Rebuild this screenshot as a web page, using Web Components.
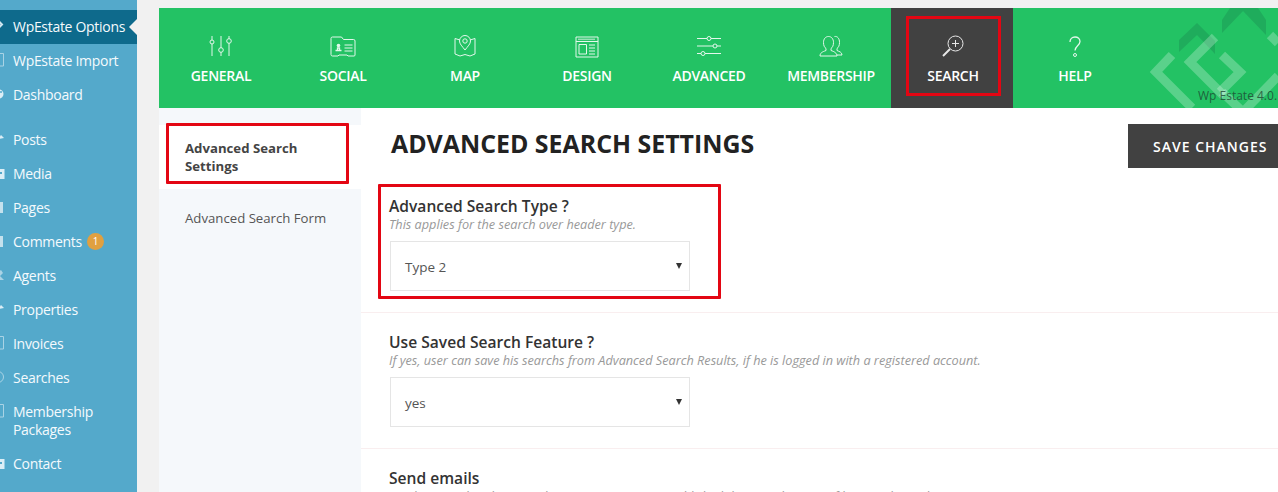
<!DOCTYPE html>
<html>
<head>
<meta charset="utf-8">
<title>WpEstate Options</title>
<style>
	html, body { margin: 0; height: 492px; overflow: hidden; background: #f1f1f1; }
	body { font-family: "Open Sans", sans-serif; }
	.page { display: flex; height: 492px; overflow: hidden; }
</style>
</head>
<body>

<div class="page">
	<wp-sidebar>
		<wp-menu-item icon="diamond" active>WpEstate Options</wp-menu-item>
		<wp-menu-item icon="page">WpEstate Import</wp-menu-item>
		<wp-menu-item icon="dial" last>Dashboard</wp-menu-item>
		<wp-menu-item icon="pin">Posts</wp-menu-item>
		<wp-menu-item icon="media">Media</wp-menu-item>
		<wp-menu-item icon="bar">Pages</wp-menu-item>
		<wp-menu-item icon="bar" badge="1">Comments</wp-menu-item>
		<wp-menu-item icon="user">Agents</wp-menu-item>
		<wp-menu-item icon="pin">Properties</wp-menu-item>
		<wp-menu-item icon="page">Invoices</wp-menu-item>
		<wp-menu-item icon="ring">Searches</wp-menu-item>
		<wp-menu-item icon="page">Membership Packages</wp-menu-item>
		<wp-menu-item icon="media">Contact</wp-menu-item>
	</wp-sidebar>

	<opt-panel>
		<opt-nav slot="nav">
			<opt-tab icon="general">GENERAL</opt-tab>
			<opt-tab icon="social">SOCIAL</opt-tab>
			<opt-tab icon="map">MAP</opt-tab>
			<opt-tab icon="design">DESIGN</opt-tab>
			<opt-tab icon="advanced">ADVANCED</opt-tab>
			<opt-tab icon="membership">MEMBERSHIP</opt-tab>
			<opt-tab icon="search" active>SEARCH</opt-tab>
			<opt-tab icon="help">HELP</opt-tab>
		</opt-nav>

		<opt-subnav slot="side">
			<opt-subitem active>Advanced Search Settings</opt-subitem>
			<opt-subitem>Advanced Search Form</opt-subitem>
		</opt-subnav>

		<opt-header>ADVANCED SEARCH SETTINGS</opt-header>

		<opt-field marked>
			<span slot="title">Advanced Search Type ?</span>
			<span slot="desc">This applies for the search over header type.</span>
			<opt-select>Type 2</opt-select>
		</opt-field>
		<opt-field>
			<span slot="title">Use Saved Search Feature ?</span>
			<span slot="desc">If yes, user can save his searchs from Advanced Search Results, if he is logged in with a registered account.</span>
			<opt-select>yes</opt-select>
		</opt-field>
		<opt-field>
			<span slot="title">Send emails</span>
			<span slot="desc">Send an email to the user when a new property is published that matches one of his saved searches.</span>
			<opt-select>yes</opt-select>
		</opt-field>
	</opt-panel>
</div>

<script>
(function() {
	const SIDE_ICONS = {
		diamond: '<path d="M-1 3.5 2 6.5-1 9.5" fill="none" stroke="#cfe6f0" stroke-width="2"/>',
		page: '<path d="M-2 1.5H3.5V14H-2" fill="none" stroke="#a9d3e5" stroke-width="1"/>',
		dial: '<circle cx="-1" cy="8" r="4.5" fill="#dceef6"/><circle cx="1" cy="6" r="1" fill="#54a9cb"/>',
		pin: '<path d="M-2 8 1 4 4 7Z" fill="#dceef6"/>',
		media: '<path d="M-2 4H4.5V14H-2Z" fill="#dceef6"/><path d="M0 7H2V9H0Z" fill="#54a9cb"/>',
		bar: '<path d="M-2 3H3V14H-2Z" fill="#c4e1ed"/>',
		user: '<path d="M-2 5 1 3 3 6 0 9 4 13H-2Z" fill="#a9d3e5"/>',
		ring: '<circle cx="-2" cy="8" r="5.5" fill="none" stroke="#a9d3e5" stroke-width="1"/>'
	};

	let menuItemTmpl = document.createElement('template');
	menuItemTmpl.innerHTML = `
		<style>
			:host {
				display: flex;
				position: relative;
				padding: 8px 0;
				line-height: 18px;
				font-size: 14px;
				letter-spacing: -0.3px;
				color: #f4fafd;
			}
			:host([active]) { background: #0e6a8c; }
			:host([last]) { margin-bottom: 11px; }
			svg { flex: none; width: 5px; height: 16px; margin-right: 8px; overflow: hidden; }
			.label { width: 114px; }
			.badge {
				display: inline-block;
				width: 17px;
				height: 17px;
				margin-left: 5px;
				border-radius: 50%;
				background: #e0a040;
				color: #fff;
				font-size: 10px;
				line-height: 17px;
				text-align: center;
				vertical-align: top;
			}
			.arrow {
				display: none;
				position: absolute;
				right: 0;
				top: 9px;
				border: 8px solid transparent;
				border-left: 0;
				border-right-color: #f1f1f1;
			}
			:host([active]) .arrow { display: block; }
		</style>
		<svg viewBox="0 0 5 16"></svg>
		<div class="label"><slot></slot></div>
		<div class="arrow"></div>
	`;

	class WpMenuItem extends HTMLElement {
		constructor() {
			super();
			let shadow = this.attachShadow({ mode: 'open' });
			shadow.appendChild(menuItemTmpl.content.cloneNode(true));
		}
		connectedCallback() {
			this.shadowRoot.querySelector('svg').innerHTML = SIDE_ICONS[this.getAttribute('icon')] || '';
			let badge = this.getAttribute('badge');
			if (badge) {
				let b = document.createElement('span');
				b.className = 'badge';
				b.textContent = badge;
				this.shadowRoot.querySelector('.label').appendChild(b);
			}
		}
	}

	class WpSidebar extends HTMLElement {
		constructor() {
			super();
			this.attachShadow({ mode: 'open' }).innerHTML = `
				<style>
					:host {
						display: block;
						flex: none;
						box-sizing: border-box;
						width: 137px;
						height: 492px;
						padding-top: 10px;
						background: #54a9cb;
					}
				</style>
				<slot></slot>
			`;
		}
	}

	class OptPanel extends HTMLElement {
		constructor() {
			super();
			this.attachShadow({ mode: 'open' }).innerHTML = `
				<style>
					:host {
						display: block;
						flex: none;
						width: 1119px;
						margin: 8px 0 0 22px;
					}
					.body { display: flex; background: #fff; height: 384px; overflow: hidden; }
					.content { flex: 1; min-width: 0; }
				</style>
				<slot name="nav"></slot>
				<div class="body">
					<slot name="side"></slot>
					<div class="content"><slot></slot></div>
				</div>
			`;
		}
	}

	// drawn in a 26x24 box, centred on x=13
	const TAB_ICONS = {
		general: '<path d="M4 1v20M13 1v20M21 1v20"/><circle cx="4" cy="7" r="2" fill="#23c264"/><circle cx="13" cy="15" r="2.300" fill="#23c264"/><circle cx="21" cy="6" r="2.300" fill="#23c264"/>',
		social: '<path d="M1 3.500a1.500 1.500 0 0 1 1.500-1.500h9l2 2.500h10a1.500 1.500 0 0 1 1.500 1.500v14a1 1 0 0 1-1 1h-6l-1-1h-8l-1 1H2.500a1.500 1.500 0 0 1-1.500-1.500z"/><path d="M5.500 15.500h6M7.500 15v-2h2v2" stroke-width="1.300"/><circle cx="8.500" cy="10.500" r="1.800" fill="#fff" stroke="none"/><path d="M14.500 10h8M14.500 13h8M14.500 16h8"/>',
		map: '<path d="M8 5 3 3.500v15.500l5 2 5-1.500 5 1.500 5-2V3.500L18 5"/><path d="M13 15c-3-4-5.500-6-5.500-9a5.500 5.500 0 0 1 11 0c0 3-2.500 5-5.500 9z" fill="#23c264"/><circle cx="13" cy="6" r="2.200"/>',
		design: '<path d="M2 2h22v20H2zM2 6.500h22M5 9.500h7.500V19H5zM15 10h6M15 13h6M15 16h6M15 19h6"/><path d="M4 4.300h17" stroke-width="1.500" opacity=".6"/>',
		advanced: '<path d="M1 3.500h24M1 11h24M1 18.500h24"/><circle cx="13" cy="3.500" r="2" fill="#23c264"/><circle cx="19" cy="11" r="2" fill="#23c264"/><circle cx="7" cy="18.500" r="2" fill="#23c264"/>',
		membership: '<path d="M2 21c0-3 2-4 6-5.500v-2c-1.500-1-2.500-3-2.500-6 0-3.500 2-6 5-6s5 2.500 5 6c0 3-1 5-2.500 6v2c3 1 6 2.500 6 5.500z" fill="#23c264"/><path d="M16.500 1.500c3-.5 5 2 5 6 0 3-1 5-2.500 6v2c2 1 5 1.500 5 4.500h-5"/>',
		search: '<circle cx="15.500" cy="8.500" r="7.500"/><path d="M15.500 5v7M12 8.500h7"/><path d="M10 14 3 21" stroke-width="2"/>',
		help: '<path d="M8 7c0-3 2-5 5-5s5 2 5 4.500c0 4-5 4.500-5 9" stroke-width="1.300"/><circle cx="13" cy="20" r="1.500"/>'
	};

	let tabTmpl = document.createElement('template');
	tabTmpl.innerHTML = `
		<style>
			:host {
				display: flex;
				flex-direction: column;
				align-items: center;
				position: relative;
				z-index: 1;
				box-sizing: border-box;
				width: 122px;
				height: 100px;
				padding: 27px 0 0 2px;
				font-size: 14px;
				font-weight: 600;
				letter-spacing: -0.3px;
				color: #fff;
			}
			:host([active]) { background: #414141; }
			:host([active])::after {
				content: '';
				position: absolute;
				left: 15px;
				top: 8px;
				width: 89px;
				height: 74px;
				border: 3px solid #e30613;
			}
			svg { width: 26px; height: 24px; fill: none; stroke: #fff; stroke-width: 1; opacity: .88; }
			.label { margin-top: 8px; line-height: 18px; }
		</style>
		<svg viewBox="0 0 26 24"></svg>
		<div class="label"><slot></slot></div>
	`;

	class OptTab extends HTMLElement {
		constructor() {
			super();
			let shadow = this.attachShadow({ mode: 'open' });
			shadow.appendChild(tabTmpl.content.cloneNode(true));
		}
		connectedCallback() {
			this.shadowRoot.querySelector('svg').innerHTML = TAB_ICONS[this.getAttribute('icon')] || '';
		}
	}

	class OptNav extends HTMLElement {
		constructor() {
			super();
			this.attachShadow({ mode: 'open' }).innerHTML = `
				<style>
					:host {
						display: flex;
						position: relative;
						height: 100px;
						background: #23c264;
						overflow: hidden;
					}
					svg { position: absolute; left: 971px; top: 0; width: 148px; height: 100px; }
					.version {
						position: absolute;
						left: 1039px;
						top: 79px;
						font-size: 12px;
						line-height: 17px;
						white-space: nowrap;
						color: rgba(30, 70, 50, .8);
					}
				</style>
				<svg viewBox="0 0 148 100">
					<path d="M92 12 100 0H128L136 12V27L113 3 92 25Z" fill="#1fa45a" opacity=".75"/>
					<path d="M49 32 67 15 85 33V46L67 27 49 44Z" fill="#1fa45a" opacity=".75"/>
					<g fill="none" stroke="#fff" stroke-opacity=".25" stroke-width="9">
						<path d="M42 47 26 64 50 88 62 100"/>
						<path d="M85 29 60 54 94 88"/>
						<path d="M92 47 110 64 90 84"/>
						<path d="M92 84 113 104 148 68"/>
						<path d="M140 27 148 35"/>
					</g>
				</svg>
				<div class="version">Wp Estate 4.0.</div>
				<slot></slot>
			`;
		}
	}

	class OptSubnav extends HTMLElement {
		constructor() {
			super();
			this.attachShadow({ mode: 'open' }).innerHTML = `
				<style>
					:host {
						display: block;
						flex: none;
						box-sizing: border-box;
						width: 202px;
						padding-top: 17px;
						background: #f5f8fb;
					}
				</style>
				<slot></slot>
			`;
		}
	}

	class OptSubitem extends HTMLElement {
		constructor() {
			super();
			this.attachShadow({ mode: 'open' }).innerHTML = `
				<style>
					:host {
						display: block;
						position: relative;
						padding: 20px 26px;
						line-height: 18px;
						font-size: 13.200px;
						color: #555;
					}
					:host([active]) {
						padding-top: 14px;
						padding-bottom: 14px;
						background: #fff;
						font-weight: 700;
						color: #444;
					}
					:host([active])::after {
						content: '';
						position: absolute;
						left: 7px;
						top: -2px;
						width: 177px;
						height: 55px;
						border: 3px solid #e30613;
						border-radius: 1px;
					}
				</style>
				<slot></slot>
			`;
		}
	}

	class OptHeader extends HTMLElement {
		constructor() {
			super();
			this.attachShadow({ mode: 'open' }).innerHTML = `
				<style>
					:host {
						display: flex;
						justify-content: space-between;
						box-sizing: border-box;
						height: 69px;
						padding: 16px 0 0 30px;
					}
					h1 {
						margin: -1px 0 0;
						font-size: 24.900px;
						line-height: 40px;
						font-weight: 700;
						color: #222;
					}
					.save {
						flex: none;
						box-sizing: border-box;
						width: 150px;
						height: 44px;
						padding-left: 25px;
						background: #414141;
						color: #fff;
						font-size: 14px;
						font-weight: 600;
						letter-spacing: 1px;
						line-height: 46px;
						white-space: nowrap;
					}
				</style>
				<h1><slot></slot></h1>
				<div class="save">SAVE CHANGES</div>
			`;
		}
	}

	class OptField extends HTMLElement {
		constructor() {
			super();
			this.attachShadow({ mode: 'open' }).innerHTML = `
				<style>
					:host {
						display: block;
						position: relative;
						padding: 19px 0 21px 28px;
						border-bottom: 1px solid #f9eeef;
					}
					.title {
						font-size: 15.600px;
						font-weight: 600;
						line-height: 20px;
						color: #333;
					}
					.desc {
						margin-bottom: 8px;
						font-size: 12.700px;
						font-style: italic;
						line-height: 17px;
						color: #999;
					}
					:host([marked])::after {
						content: '';
						position: absolute;
						left: 17px;
						top: 7px;
						width: 337px;
						height: 109px;
						border: 3px solid #e30613;
						border-radius: 1px;
					}
				</style>
				<div class="title"><slot name="title"></slot></div>
				<div class="desc"><slot name="desc"></slot></div>
				<slot></slot>
			`;
		}
	}

	class OptSelect extends HTMLElement {
		constructor() {
			super();
			this.attachShadow({ mode: 'open' }).innerHTML = `
				<style>
					:host {
						display: flex;
						align-items: center;
						justify-content: space-between;
						box-sizing: border-box;
						width: 300px;
						height: 50px;
						margin-left: 1px;
						padding: 2px 7px 0 14px;
						border: 1px solid #e5e5e5;
						font-size: 13.500px;
						color: #555;
					}
					.arrow {
						margin-bottom: 3px;
						border: 3px solid transparent;
						border-top: 6px solid #333;
						border-bottom: 0;
					}
				</style>
				<slot></slot>
				<div class="arrow"></div>
			`;
		}
	}

	customElements.define('wp-menu-item', WpMenuItem);
	customElements.define('wp-sidebar', WpSidebar);
	customElements.define('opt-panel', OptPanel);
	customElements.define('opt-tab', OptTab);
	customElements.define('opt-nav', OptNav);
	customElements.define('opt-subnav', OptSubnav);
	customElements.define('opt-subitem', OptSubitem);
	customElements.define('opt-header', OptHeader);
	customElements.define('opt-field', OptField);
	customElements.define('opt-select', OptSelect);
})();
</script>
</body>
</html>
